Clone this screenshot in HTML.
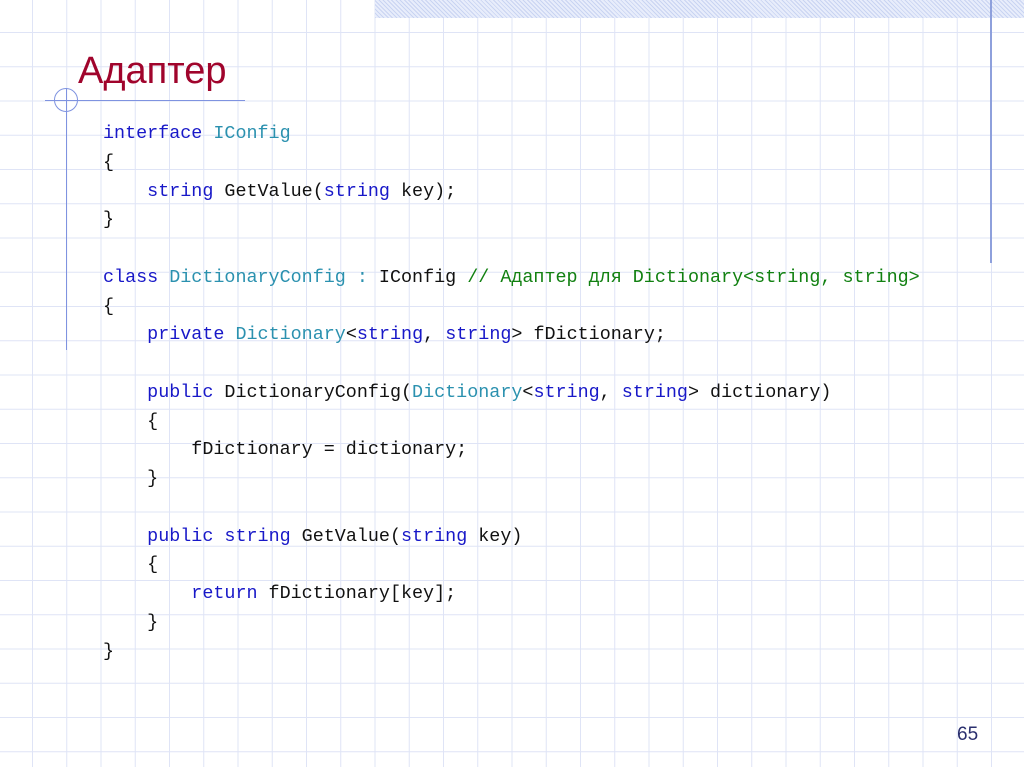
<!DOCTYPE html>
<html><head><meta charset="utf-8"><style>
html,body{margin:0;padding:0}
body{width:1024px;height:767px;position:relative;overflow:hidden;background-color:#fff;
background-image:linear-gradient(to right,#dfe4f6 1px,transparent 1px),linear-gradient(to bottom,#dfe4f6 1px,transparent 1px);
background-size:34.25px 34.25px;background-position:32px 32px;}
.band{position:absolute;left:375px;top:0;width:649px;height:18px;background:repeating-linear-gradient(45deg,#c9d4f2 0 1px,#e8edfb 1px 3px);}
.vr{position:absolute;left:990px;top:0;width:2px;height:263px;background:#8ea0dc}
.vl{position:absolute;left:66px;top:88px;width:1px;height:262px;background:#7f93e0}
.hl{position:absolute;left:45px;top:100px;width:200px;height:1px;background:#7f93e0}
.circ{position:absolute;left:54px;top:88px;width:22px;height:22px;border:1px solid #7f93e0;border-radius:50%}
h1{position:absolute;left:78px;top:50px;margin:0;font:38px "Liberation Sans",sans-serif;color:#a0042c;}
pre{position:absolute;left:103px;top:120px;margin:0;font:18.4px/28.75px "Liberation Mono","DejaVu Sans Mono",monospace;color:#111;}
.k{color:#1818c8}.t{color:#2b91af}.c{color:#118011}
.pn{position:absolute;left:957px;top:724px;font:19px "Liberation Sans",sans-serif;color:#2a2f6e}
</style></head><body>
<div class="band"></div><div class="vr"></div><div class="vl"></div><div class="hl"></div><div class="circ"></div>
<h1>Адаптер</h1>
<pre><span class="k">interface</span> <span class="t">IConfig</span>
{
    <span class="k">string</span> GetValue(<span class="k">string</span> key);
}

<span class="k">class</span> <span class="t">DictionaryConfig :</span> IConfig <span class="c">// Адаптер для Dictionary&lt;string, string&gt;</span>
{
    <span class="k">private</span> <span class="t">Dictionary</span>&lt;<span class="k">string</span>, <span class="k">string</span>&gt; fDictionary;

    <span class="k">public</span> DictionaryConfig(<span class="t">Dictionary</span>&lt;<span class="k">string</span>, <span class="k">string</span>&gt; dictionary)
    {
        fDictionary = dictionary;
    }

    <span class="k">public</span> <span class="k">string</span> GetValue(<span class="k">string</span> key)
    {
        <span class="k">return</span> fDictionary[key];
    }
}</pre>
<div class="pn">65</div>
</body></html>
